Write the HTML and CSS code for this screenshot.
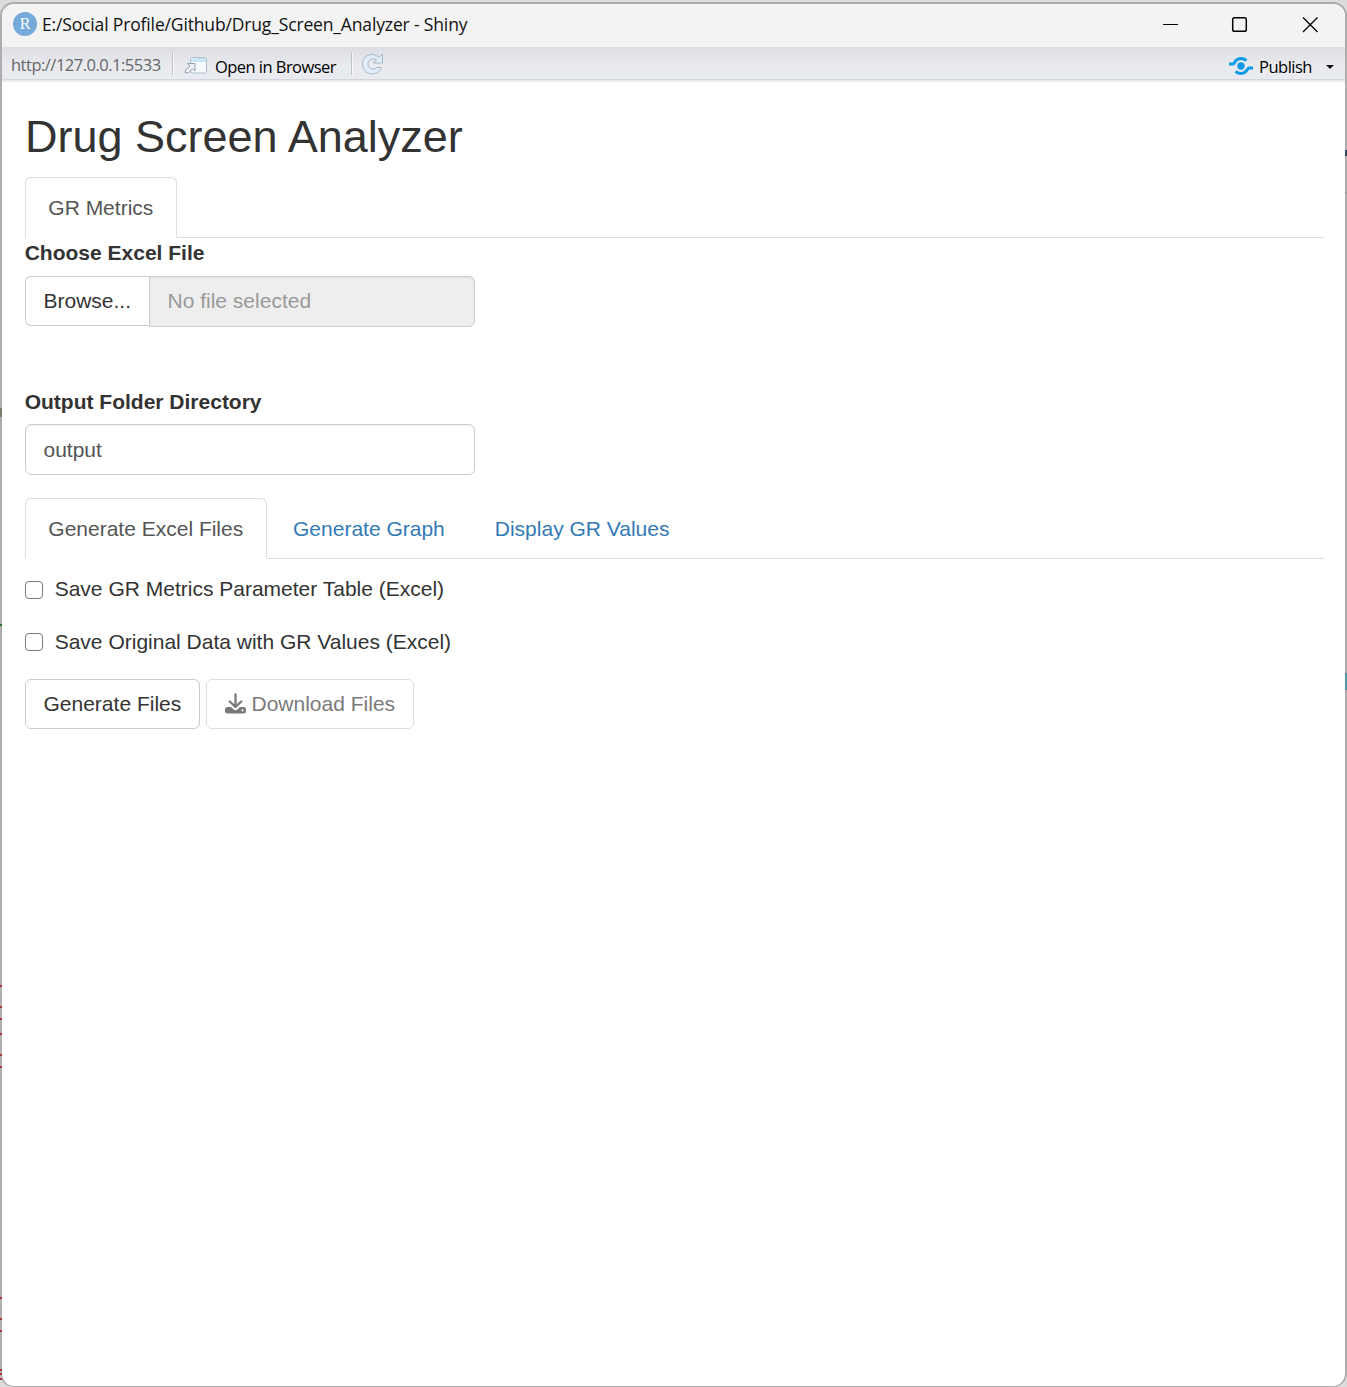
FILE: index.html
```html
<!DOCTYPE html>
<html lang="en">
<head>
<meta charset="utf-8">
<title>Drug Screen Analyzer</title>
<link rel="stylesheet" href="styles.css">
</head>
<body>
<div class="window">
  <header class="titlebar">
    <svg class="app-icon" width="24" height="24" viewBox="0 0 24 24"><circle cx="12" cy="12" r="12" fill="#75aadb"/><text x="12" y="17" text-anchor="middle" class="app-letter">R</text></svg>
    <span class="window-title">E:/Social Profile/Github/Drug_Screen_Analyzer - Shiny</span>
    <svg class="controls" width="150" height="20" viewBox="0 0 150 20" fill="none" stroke="#000" stroke-width="1.3"><path d="M0 10.5H15" stroke-width="1"/><rect x="69.7" y="3.7" width="13.6" height="13.6" rx="1.8" stroke-width="1.5"/><path d="M140 3.500L154.500 18M154.500 3.500L140 18"/></svg>
  </header>
  <div class="toolbar">
    <span class="url">http://127.0.0.1:5533</span>
    <i class="divider"></i>
    <svg class="open-icon" width="24" height="20" viewBox="0 0 24 20"><rect x="6.500" y="1.500" width="16" height="15.500" rx="2" fill="#f7fafc" stroke="#a9bdca"/><path d="M7 6V3.500Q7 2 8.500 2H20.500Q22 2 22 3.500V6Z" fill="#c9e4f6"/><path d="M3.500 7.500H11V15L8.500 12.500L4.500 17L1 16.500L1.500 14L6 10Z" fill="#eef1f5" stroke="#8fa3b2"/></svg>
    <span class="tool-label">Open in Browser</span>
    <i class="divider second"></i>
    <svg class="reload" width="24" height="24" viewBox="0 0 24 24"><path d="M18 5.300L21.500 2V11H12.500L15.500 8C12 5.200 7 7.500 7 12C7 17 13 18.500 15.500 15.500H20.500C18.500 20 15.500 22 11.500 22C5.500 22 1.500 17.500 1.500 12C1.500 3.500 11 -0.500 18 5.300Z" fill="#e1edfa" stroke="#a9b4c2" stroke-linejoin="round"/></svg>
    <svg class="publish-icon" width="24" height="20" viewBox="0 0 24 20" fill="none" stroke="#0f9bea" stroke-width="3"><circle cx="12" cy="10" r="3.700" fill="#0f9bea" stroke="none"/><path d="M0 8H4C6 8 5.500 2.500 12 2.500C14.500 2.500 16 3.300 17.500 4.500M24 12H20C18 12 18.500 17.500 12 17.500C9.500 17.500 8 16.700 6.500 15.500"/></svg>
    <span class="tool-label publish">Publish</span>
    <i class="caret"></i>
  </div>
  <main class="page">
    <h1>Drug Screen Analyzer</h1>
    <nav class="tabs"><a class="tab active">GR Metrics</a></nav>
    <label class="field-label">Choose Excel File</label>
    <div class="file-input"><span class="browse">Browse...</span><span class="file-name">No file selected</span></div>
    <label class="field-label output-label">Output Folder Directory</label>
    <div class="text-input">output</div>
    <nav class="tabs inner"><a class="tab active">Generate Excel Files</a><a class="tab">Generate Graph</a><a class="tab">Display GR Values</a></nav>
    <label class="check"><i class="box"></i>Save GR Metrics Parameter Table (Excel)</label>
    <label class="check"><i class="box"></i>Save Original Data with GR Values (Excel)</label>
    <div class="buttons">
      <button class="btn">Generate Files</button>
      <button class="btn disabled"><svg width="21" height="21" viewBox="0 0 21 21" fill="none" stroke="#333" stroke-linecap="round" stroke-linejoin="round"><path d="M10.500 1.500V13M4.700 8.500L10.500 13.800L16.300 8.500" stroke-width="2.300"/><path fill="#333" stroke="none" fill-rule="evenodd" d="M2.500 14H6L8.700 16.500Q10.500 18 12.300 16.500L15 14H18.500Q21 14 21 16.500V18Q21 20.500 18.500 20.500H2.500Q0 20.500 0 18V16.500Q0 14 2.500 14ZM17.500 16.200A1.100 1.100 0 1 0 17.500 18.400A1.100 1.100 0 1 0 17.500 16.200Z"/></svg><span>Download Files</span></button>
    </div>
  </main>
</div>
</body>
</html>
```
FILE: styles.css
```css
* { box-sizing: border-box; }
html { background: #dcdcdc; }
body { margin: 0; padding-top: 2px; height: 1387px; overflow: hidden; font-family: "Liberation Sans", Arial, sans-serif; font-size: 21px; line-height: 30px; color: #333; }
.window { height: 1385px; border: 2px solid #adadad; border-bottom-width: 1px; border-radius: 14px; background: #fff; overflow: hidden; }
/* slivers of the windows behind, along both edges */
body::before, body::after { content: ""; position: absolute; top: 0; width: 2px; height: 1387px; background-repeat: no-repeat; }
body::before {
  left: 0;
  background-image: linear-gradient(#77806f, #77806f), linear-gradient(#2f6a30, #2f6a30), linear-gradient(#a83238, #a83238), linear-gradient(#a83238, #a83238), linear-gradient(#a83238, #a83238), linear-gradient(#a83238, #a83238), linear-gradient(#a83238, #a83238), linear-gradient(#a83238, #a83238), linear-gradient(#a83238, #a83238), linear-gradient(#a83238, #a83238), linear-gradient(#a83238, #a83238), linear-gradient(#a83238, #a83238), linear-gradient(#a83238, #a83238), linear-gradient(#a83238, #a83238);
  background-size: 2px 9px, 2px 2px, 2px 2px, 2px 2px, 2px 2px, 2px 2px, 2px 2px, 2px 2px, 2px 2px, 2px 2px, 2px 2px, 2px 2px, 2px 2px, 2px 2px;
  background-position: 0 408px, 0 624px, 0 985px, 0 1006px, 0 1018px, 0 1033px, 0 1054px, 0 1066px, 0 1297px, 0 1318px, 0 1330px, 0 1369px, 0 1373px, 0 1378px;
}
body::after {
  right: 0;
  background-image: linear-gradient(#344668, #344668), linear-gradient(#4b99a8, #4b99a8), linear-gradient(#999, #999);
  background-size: 2px 6px, 2px 17px, 2px 2px;
  background-position: 0 150px, 0 673px, 0 192px;
}
.titlebar { height: 43px; display: flex; align-items: center; padding: 0 26px 3px 11px; background: #f3f3f3; }
.app-icon { flex: none; }
.app-letter { font: 16px "Liberation Serif", serif; fill: #fff; }
.window-title { margin-left: 5px; font: 17.5px/24px "Open Sans", sans-serif; color: #111; letter-spacing: -0.15px; white-space: nowrap; }
.controls { margin-left: auto; margin-right: 6px; overflow: visible; }
.toolbar { height: 35px; display: flex; align-items: center; padding: 3px 11px 0 9px; background: linear-gradient(#dcdee3, #e9ebef 60%, #e9ebf0); border-bottom: 2px solid #e9ebf0; box-shadow: inset 0 -1px #d3d6dc; font: 16.5px/24px "Open Sans", sans-serif; white-space: nowrap; }
.url { color: #666; letter-spacing: -0.5px; width: 150px; padding-bottom: 1px; }
.divider { width: 2px; height: 23px; margin: -4px 0 0 11px; border-left: 1px solid #bfc2c7; border-right: 1px solid #f8f8fa; }
.divider.second { margin-left: 15px; }
.open-icon { margin: 2px 0 0 10px; }
.tool-label { margin-left: 7px; padding-top: 3px; color: #000; letter-spacing: -0.55px; width: 121px; }
.reload { margin: -2px 0 0 8px; }
.publish-icon { margin: 2px 0 0 auto; }
.tool-label.publish { width: 54px; margin-left: 6px; letter-spacing: -0.5px; }
.caret { margin: 3px 0 0 13px; border: 4px solid transparent; border-top: 4px solid #111; border-bottom: 0; }
.page { padding: 30px 21px 0 23px; }
h1 { margin: 0 0 15px; font-size: 45px; line-height: 50px; font-weight: 400; }
.tabs { display: flex; height: 61px; border-bottom: 1px solid #ddd; }
.tab { height: 61px; margin-right: 3px; padding: 15px 22.500px; border: 1px solid transparent; border-radius: 6px 6px 0 0; color: #337ab7; white-space: nowrap; line-height: 30px; }
.tab.active { color: #555; background: #fff; border-color: #ddd #ddd transparent; padding: 15px 22.300px; }
.field-label { display: block; font-weight: 700; height: 30px; margin-bottom: 8px; text-indent: -0.3px; }
.file-input { display: flex; width: 450px; height: 51px; }
.browse { width: 124px; height: 50px; padding: 9px 17.500px; border: 1px solid #ccc; border-right: 0; border-radius: 6px 0 0 6px; }
.file-name { flex: 1; padding: 9px 17.500px; color: #999; background: #eee; border: 1px solid #ccc; border-radius: 0 6px 6px 0; box-shadow: inset 0 1px 2px #0001; }
.output-label { margin-top: 60px; margin-bottom: 7px; }
.text-input { width: 450px; height: 51px; padding: 10px 17.500px; border: 1px solid #ccc; border-radius: 6px; box-shadow: inset 0 1px 2px #0001; color: #555; }
.inner { margin: 23px 0 15px; }
.check { display: flex; height: 30px; margin-bottom: 23px; }
.box { width: 18px; height: 18px; border: 1.500px solid #767676; border-radius: 4px; margin: 7px 11.700px 0 0; }
.check + .check .box { margin-top: 6px; }
.buttons { display: flex; gap: 6px; margin-top: -1px; }
.btn { display: flex; align-items: center; gap: 6px; width: 175px; height: 50px; padding: 0 17.500px; font: inherit; color: #333; background: #fff; border: 1px solid #ccc; border-radius: 6px; white-space: nowrap; }
.btn.disabled { width: 208px; opacity: .65; }
.btn svg { margin-top: -2px; }
```
